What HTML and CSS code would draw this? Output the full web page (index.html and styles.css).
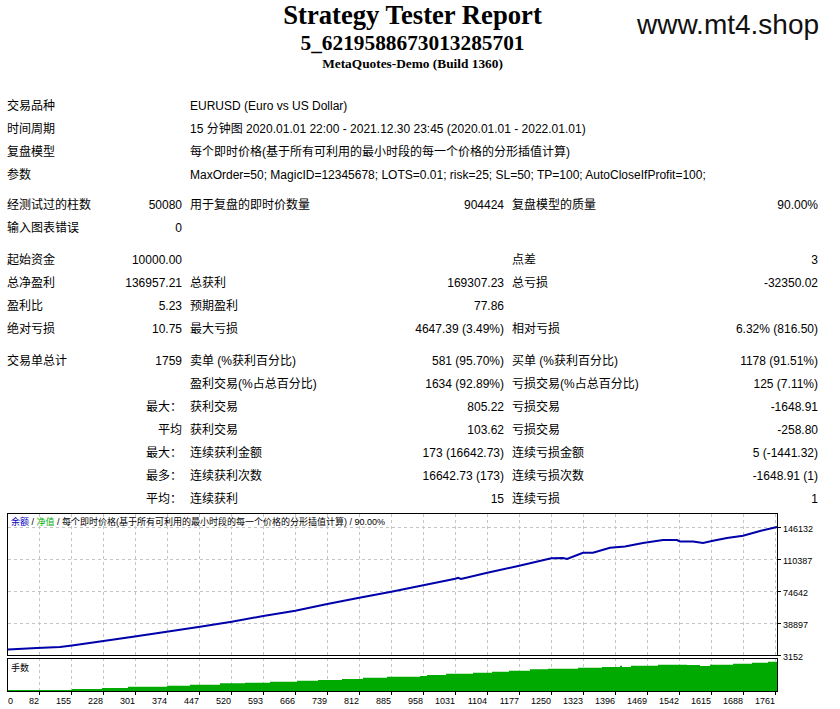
FILE: index.html
```html
<!DOCTYPE html>
<html>
<head>
<meta charset="utf-8">
<title>Strategy Tester: 5_6219588673013285701</title>
<link rel="stylesheet" href="styles.css">
</head>
<body>
<div class="page">
  <div class="header">
    <div class="title">Strategy Tester Report</div>
    <div class="subtitle">5_6219588673013285701</div>
    <div class="server">MetaQuotes-Demo (Build 1360)</div>
  </div>
  <div class="watermark">www.mt4.shop</div>

  <div class="stats">
    <div class="c lab">交易品种</div><div class="c wide">EURUSD (Euro vs US Dollar)</div>
    <div class="c lab">时间周期</div><div class="c wide">15 分钟图 2020.01.01 22:00 - 2021.12.30 23:45 (2020.01.01 - 2022.01.01)</div>
    <div class="c lab">复盘模型</div><div class="c wide">每个即时价格(基于所有可利用的最小时段的每一个价格的分形插值计算)</div>
    <div class="c lab">参数</div><div class="c wide">MaxOrder=50; MagicID=12345678; LOTS=0.01; risk=25; SL=50; TP=100; AutoCloseIfProfit=100;</div>
    <div class="sp7"></div>

    <div class="c">经测试过的柱数</div><div class="c r">50080</div><div class="c">用于复盘的即时价数量</div><div class="c r">904424</div><div class="c">复盘模型的质量</div><div class="c r">90.00%</div>
    <div class="c">输入图表错误</div><div class="c r">0</div><div class="c"></div><div class="c"></div><div class="c"></div><div class="c"></div>
    <div class="sp9"></div>

    <div class="c">起始资金</div><div class="c r">10000.00</div><div class="c"></div><div class="c"></div><div class="c">点差</div><div class="c r">3</div>
    <div class="c">总净盈利</div><div class="c r">136957.21</div><div class="c">总获利</div><div class="c r">169307.23</div><div class="c">总亏损</div><div class="c r">-32350.02</div>
    <div class="c">盈利比</div><div class="c r">5.23</div><div class="c">预期盈利</div><div class="c r">77.86</div><div class="c"></div><div class="c"></div>
    <div class="c">绝对亏损</div><div class="c r">10.75</div><div class="c">最大亏损</div><div class="c r">4647.39 (3.49%)</div><div class="c">相对亏损</div><div class="c r">6.32% (816.50)</div>
    <div class="sp9"></div>

    <div class="c">交易单总计</div><div class="c r">1759</div><div class="c">卖单 (%获利百分比)</div><div class="c r">581 (95.70%)</div><div class="c">买单 (%获利百分比)</div><div class="c r">1178 (91.51%)</div>
    <div class="c"></div><div class="c"></div><div class="c">盈利交易(%占总百分比)</div><div class="c r">1634 (92.89%)</div><div class="c">亏损交易(%占总百分比)</div><div class="c r">125 (7.11%)</div>
    <div class="c"></div><div class="c r">最大：</div><div class="c">获利交易</div><div class="c r">805.22</div><div class="c">亏损交易</div><div class="c r">-1648.91</div>
    <div class="c"></div><div class="c r">平均</div><div class="c">获利交易</div><div class="c r">103.62</div><div class="c">亏损交易</div><div class="c r">-258.80</div>
    <div class="c"></div><div class="c r">最大：</div><div class="c">连续获利金额</div><div class="c r">173 (16642.73)</div><div class="c">连续亏损金额</div><div class="c r">5 (-1441.32)</div>
    <div class="c"></div><div class="c r">最多：</div><div class="c">连续获利次数</div><div class="c r">16642.73 (173)</div><div class="c">连续亏损次数</div><div class="c r">-1648.91 (1)</div>
    <div class="c"></div><div class="c r">平均：</div><div class="c">连续获利</div><div class="c r">15</div><div class="c">连续亏损</div><div class="c r">1</div>
  </div>

  <svg class="chart" width="840" height="199" viewBox="0 510 840 199" xmlns="http://www.w3.org/2000/svg">
    <rect x="0" y="510" width="840" height="199" fill="#fff"/>
    <!-- vertical grid -->
    <path class="grid" d="M39.5 514V691M71.5 514V691M103.5 514V691M135.5 514V691M167.5 514V691M199.5 514V691M231.5 514V691M263.5 514V691M295.5 514V691M327.5 514V691M359.5 514V691M391.5 514V691M423.5 514V691M455.5 514V691M487.5 514V691M519.5 514V691M551.5 514V691M583.5 514V691M615.5 514V691M647.5 514V691M679.5 514V691M711.5 514V691M743.5 514V691M775.5 514V691"/>
    <!-- horizontal grid -->
    <path class="grid" d="M8 527.5H777M8 559.5H777M8 591.5H777M8 623.5H777"/>
    <rect x="0" y="656.5" width="779" height="2" fill="#fff"/>

    <!-- volume -->
    <path class="vol" d="M8 691V690H72V689H102V688H128V686.7H167V685.7H190V684.7H220V683.3H245V682.7H270V681.7H297V680.7H318V680H342V679H363V677.7H387V676.7H420V676H427V675H446V673.7H473V672.7H492V671.7H509V670.7H530V669.3H548V668.7H578V667.7H602V667H620V665.7H622V667H631V665.7H658V664.7H687V665H700V666H710V664.7H733V663.7H752V662.7H768V661.7H777V691Z"/>

    <!-- balance -->
    <polyline class="bal" points="8,649.5 37,648 60,647 72,645.5 100,641.5 133,636.7 160,632.7 200,626.7 231.7,621.7 263.3,616 295.3,610.7 327.3,604 359.3,597.7 391.3,591.7 423.3,585.3 455.3,578.7 458,577.8 461,579 487.3,572.7 519.3,565.7 551.3,558.3 563,558 567,559 583,552.7 593,552.7 610,547.7 625,546.5 643,543 663,540 677,540 680,541.5 693,541.5 703,543 713,540.7 727,538 743,535.7 760,531 777,527"/>

    <!-- frames -->
    <rect class="frame" x="7.5" y="513.5" width="770" height="142"/>
    <rect class="frame" x="7.5" y="658.5" width="770" height="33"/>

    <!-- ticks -->
    <path class="tick" d="M778 527.5H781M778 559.5H781M778 591.5H781M778 623.5H781M778 655.5H781"/>
    <path class="tick" d="M39.5 692V695M71.5 692V695M103.5 692V695M135.5 692V695M167.5 692V695M199.5 692V695M231.5 692V695M263.5 692V695M295.5 692V695M327.5 692V695M359.5 692V695M391.5 692V695M423.5 692V695M455.5 692V695M487.5 692V695M519.5 692V695M551.5 692V695M583.5 692V695M615.5 692V695M647.5 692V695M679.5 692V695M711.5 692V695M743.5 692V695M775.5 692V695"/>

    <text class="lg" x="11" y="524.5"><tspan class="lg-bal">余额</tspan> / <tspan class="lg-eq">净值</tspan> / 每个即时价格(基于所有可利用的最小时段的每一个价格的分形插值计算) / 90.00%</text>
    <text class="lg" x="11" y="670.5">手数</text>

    <g class="ax">
      <text x="783" y="531.5">146132</text>
      <text x="783" y="563.5">110387</text>
      <text x="783" y="595.5">74642</text>
      <text x="783" y="627.5">38897</text>
      <text x="783" y="659.5">3152</text>
    </g>
    <g class="ax end">
      <text x="13" y="703.5">0</text>
      <text x="39" y="703.5">82</text>
      <text x="71" y="703.5">155</text>
      <text x="103" y="703.5">228</text>
      <text x="135" y="703.5">301</text>
      <text x="167" y="703.5">374</text>
      <text x="199" y="703.5">447</text>
      <text x="231" y="703.5">520</text>
      <text x="263" y="703.5">593</text>
      <text x="295" y="703.5">666</text>
      <text x="327" y="703.5">739</text>
      <text x="359" y="703.5">812</text>
      <text x="391" y="703.5">885</text>
      <text x="423" y="703.5">958</text>
      <text x="455" y="703.5">1031</text>
      <text x="487" y="703.5">1104</text>
      <text x="519" y="703.5">1177</text>
      <text x="551" y="703.5">1250</text>
      <text x="583" y="703.5">1323</text>
      <text x="615" y="703.5">1396</text>
      <text x="647" y="703.5">1469</text>
      <text x="679" y="703.5">1542</text>
      <text x="711" y="703.5">1615</text>
      <text x="743" y="703.5">1688</text>
      <text x="775" y="703.5">1761</text>
    </g>
  </svg>
</div>
</body>
</html>
```

FILE: styles.css
```css
html, body {
  margin: 0;
  padding: 0;
  background: #fff;
}

.page {
  position: relative;
  width: 840px;
  height: 709px;
  overflow: hidden;
  color: #000;
}

.header {
  width: 825px;
  text-align: center;
  font-family: "Liberation Serif", "Times New Roman", serif;
  font-weight: bold;
}

.title {
  font-size: 26.67px;
  line-height: 30px;
}

.subtitle {
  font-size: 21.33px;
  line-height: 26px;
}

.server {
  font-size: 13.33px;
  line-height: 15px;
}

.watermark {
  position: absolute;
  left: 637px;
  top: 11px;
  font-family: "Liberation Sans", Arial, sans-serif;
  font-size: 28px;
  line-height: 28px;
  color: #111;
}

.stats {
  display: grid;
  grid-template-columns: 107px 76px 194px 128px 192px 122px;
  margin: 22px 0 0 3px;
  font-family: "Liberation Sans", "Noto Sans CJK SC", sans-serif;
  font-size: 12px;
  line-height: 21px;
  white-space: nowrap;
}

.c {
  box-sizing: border-box;
  height: 23px;
  padding: 3px 4px 0;
}

.r {
  text-align: right;
}

.lab {
  grid-column: span 2;
}

.wide {
  grid-column: span 4;
}

.sp7 {
  grid-column: 1 / -1;
  height: 7px;
}

.sp9 {
  grid-column: 1 / -1;
  height: 9px;
}

.chart {
  display: block;
  margin-top: 1px;
}

.grid {
  stroke: #c4c4c4;
  stroke-width: 1;
  stroke-dasharray: 3 3;
  fill: none;
}

.frame {
  fill: none;
  stroke: #000;
  stroke-width: 1;
}

.tick {
  stroke: #000;
  stroke-width: 1;
  fill: none;
}

.vol {
  fill: #00aa00;
}

.bal {
  fill: none;
  stroke: #0000aa;
  stroke-width: 2;
  stroke-linejoin: miter;
}

.lg {
  font-family: "Liberation Sans", "Noto Sans CJK SC", sans-serif;
  font-size: 9px;
  fill: #000;
}

.lg-bal {
  fill: #0000c0;
}

.lg-eq {
  fill: #00b000;
}

.ax text {
  font-family: "Liberation Sans", Arial, sans-serif;
  font-size: 9px;
  fill: #000;
}

.ax.end text {
  text-anchor: end;
}
```
